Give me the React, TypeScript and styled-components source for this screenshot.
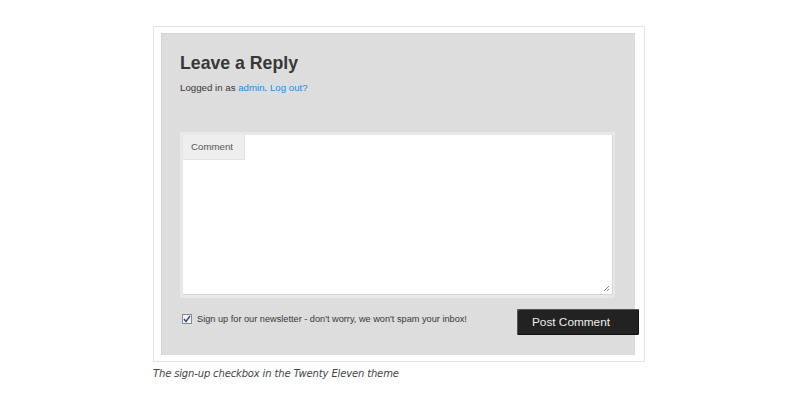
import React from 'react';
import styled, { createGlobalStyle } from 'styled-components';

const Global = createGlobalStyle`
  html, body { margin: 0; padding: 0; background: #fff; }
  body { font-family: "Liberation Sans", Arial, sans-serif; }
`;

const Page = styled.div`
  width: 800px;
  height: 400px;
  padding: 26px 0 0 153px;
  box-sizing: border-box;
`;

const Figure = styled.figure`
  margin: 0;
  width: 492px;
`;

const Frame = styled.div`
  border: 1px solid #e4e4e4;
  padding: 6px 9px 6px 7px;
  box-sizing: border-box;
  height: 336px;
`;

const Panel = styled.div`
  background: #dddddd;
  border-top: 1px solid #d2d2d2;
  border-left: 1px solid #d4d4d4;
  height: 322px;
  box-sizing: border-box;
  padding: 17px 20px 0 18px;
  display: flex;
  flex-direction: column;
`;

const Title = styled.h3`
  margin: 0;
  font-size: 17.7px;
  font-weight: bold;
  color: #373737;
  line-height: 24px;
`;

const LoggedIn = styled.p`
  margin: 6px 0 0;
  font-size: 9.7px;
  color: #373737;
  line-height: 14px;

  a {
    color: #1b8be0;
    text-decoration: none;
  }
`;

const Field = styled.div`
  margin-top: 37px;
  width: 435px;
  height: 166px;
  background: #e8e8e8;
  padding: 3px 2px 3px 3px;
  box-sizing: border-box;
  position: relative;
`;

const TextArea = styled.div`
  background: #fff;
  width: 100%;
  height: 100%;
  box-sizing: border-box;
  border-right: 1px solid #d6d6d6;
  border-bottom: 1px solid #d6d6d6;
  position: relative;
`;

const Label = styled.span`
  position: absolute;
  left: 0;
  top: 0;
  width: 62px;
  height: 25px;
  background: #eeeeee;
  border-right: 1px solid #e2e2e2;
  border-bottom: 1px solid #e2e2e2;
  font-size: 9.7px;
  color: #555;
  line-height: 24px;
  padding-left: 8px;
  box-sizing: border-box;
`;

const Grip = styled.svg`
  position: absolute;
  right: 2px;
  bottom: 2px;
`;

const Footer = styled.div`
  display: flex;
  align-items: flex-start;
  justify-content: space-between;
  margin-top: 11px;
  margin-right: -24px;
`;

const Check = styled.label`
  display: flex;
  align-items: center;
  gap: 5px;
  margin-top: 5px;
  margin-left: 2px;
  font-size: 9.2px;
  color: #373737;
`;

const Box = styled.span`
  width: 10px;
  height: 10px;
  border: 1px solid #8a8a8a;
  background: #f4f4f4;
  box-sizing: border-box;
  display: flex;
  align-items: center;
  justify-content: center;
`;

const Button = styled.button`
  width: 122px;
  height: 26px;
  background: #222;
  color: #eee;
  border: none;
  border-radius: 2px;
  box-shadow: 1px 1px 0 #555 inset, -1px -1px 0 #111 inset;
  font-family: "Liberation Sans", Arial, sans-serif;
  font-size: 11.8px;
  padding: 0 14px 0 0;
`;

const Caption = styled.figcaption`
  margin-top: 6px;
  font-family: "DejaVu Sans", Verdana, sans-serif;
  font-style: italic;
  font-size: 10px;
  color: #444;
  letter-spacing: -0.15px;
`;

export default function App() {
  return (
    <Page>
      <Global />
      <Figure>
        <Frame>
          <Panel>
            <Title>Leave a Reply</Title>
            <LoggedIn>
              Logged in as <a href="#">admin</a>. <a href="#">Log out?</a>
            </LoggedIn>
            <Field>
              <TextArea>
                <Label>Comment</Label>
                <Grip width="7" height="7" viewBox="0 0 7 7">
                  <path d="M1 6 L6 1 M4 6 L6 4" stroke="#888" strokeWidth="1" />
                </Grip>
              </TextArea>
            </Field>
            <Footer>
              <Check>
                <Box>
                  <svg width="8" height="8" viewBox="0 0 8 8">
                    <path d="M1 4 L3 6.5 L7 1" stroke="#2a4d8a" strokeWidth="1.4" fill="none" />
                  </svg>
                </Box>
                Sign up for our newsletter - don't worry, we won't spam your inbox!
              </Check>
              <Button>Post Comment</Button>
            </Footer>
          </Panel>
        </Frame>
        <Caption>The sign-up checkbox in the Twenty Eleven theme</Caption>
      </Figure>
    </Page>
  );
}
